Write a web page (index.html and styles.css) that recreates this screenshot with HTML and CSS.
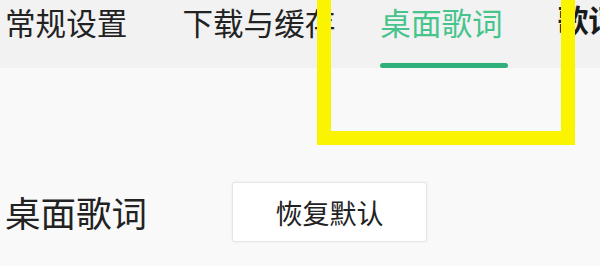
FILE: index.html
```html
<!DOCTYPE html>
<html lang="zh-CN">
<head>
<meta charset="utf-8">
<title>设置</title>
<link rel="stylesheet" href="styles.css">
</head>
<body>
<div class="page">
  <nav class="tabs">
    <span class="tab">常规设置</span>
    <span class="tab">下载与缓存</span>
    <span class="tab active">桌面歌词</span>
    <span class="tab dark">歌词设置</span>
  </nav>
  <section class="row">
    <span class="label">桌面歌词</span>
    <button class="btn">恢复默认</button>
  </section>
  <div class="highlight"></div>
</div>
</body>
</html>
```
FILE: styles.css
```css
html, body {
  margin: 0;
  padding: 0;
  background: #f9f9f9;
  overflow: hidden;
}
.page {
  position: relative;
  width: 600px;
  height: 266px;
  overflow: hidden;
  font-family: "Noto Sans CJK SC", "Noto Sans", sans-serif;
  color: #222222;
}
.tabs {
  display: flex;
  height: 68px;
  background: #f2f2f2;
  padding-left: 5px;
  white-space: nowrap;
}
.tab {
  position: relative;
  font-size: 30.6px;
  line-height: 44px;
  flex: none;
}
.tab:nth-child(1) { margin-right: 55px; }
.tab:nth-child(2) { margin-right: 45px; }
.tab:nth-child(3) { margin-right: 55px; }
.tab.active {
  color: #47c48c;
}
.tab.active::after {
  content: "";
  position: absolute;
  left: 0;
  right: -5px;
  bottom: 0;
  height: 5px;
  border-radius: 3px;
  background: #2fb07a;
}
.tab.dark {
  color: #1a1a1a;
  font-family: "Liberation Serif", "Noto Sans CJK SC", serif;
  font-weight: bold;
}
.row {
  display: flex;
  align-items: center;
  margin-top: 114px;
  padding-left: 5px;
}
.label {
  font-size: 35.5px;
  line-height: 60px;
  width: 227px;
}
.btn {
  width: 195px;
  height: 60px;
  background: #ffffff;
  border: 1px solid #e6e6e6;
  border-radius: 2px;
  box-shadow: 0 0 3px rgba(0, 0, 0, 0.06);
  font-family: inherit;
  font-size: 27px;
  color: #222222;
  padding: 0;
}
.highlight {
  position: absolute;
  left: 317px;
  top: -20px;
  width: 230px;
  height: 137px;
  border: 14px solid #fbf400;
}
```
